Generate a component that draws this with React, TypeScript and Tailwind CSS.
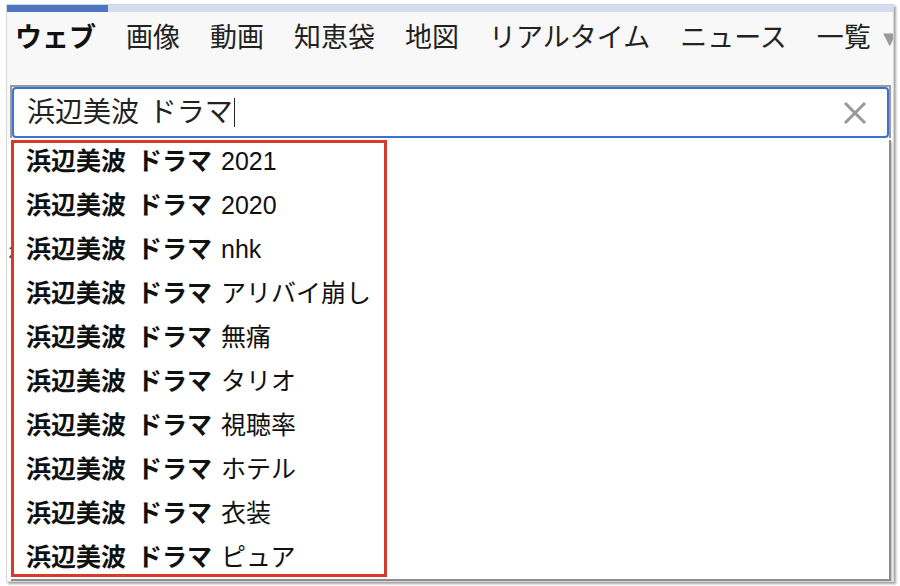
const tabs = ['ウェブ', '画像', '動画', '知恵袋', '地図', 'リアルタイム', 'ニュース', '一覧'];

const suggestions = ['2021', '2020', 'nhk', 'アリバイ崩し', '無痛', 'タリオ', '視聴率', 'ホテル', '衣装', 'ピュア'];

const font = { fontFamily: '"Liberation Sans", "Noto Sans CJK JP", sans-serif' };

export default function App() {
  return (
    <div className="w-[900px] h-[586px] bg-white overflow-hidden pt-[4px] pl-[6px]" style={font}>
      {/* Window frame */}
      <div className="relative w-[888px] h-[578px] border border-[#d6d6d6] bg-white shadow-[2px_2px_2px_rgba(0,0,0,0.35)] overflow-hidden">
        {/* Progress bar */}
        <div className="flex h-[7px]">
          <div className="w-[101px] bg-[#4d75c4]" />
          <div className="flex-1 bg-[#d3ddef]" />
        </div>

        {/* Tabs */}
        <div className="bg-[#f8f8f8]">
          <nav className="flex items-center gap-[30px] h-[52px] pl-[8px] text-[27px] text-[#222] whitespace-nowrap">
            {tabs.map((t, i) => (
              <span key={t} className={i === 0 ? 'font-bold text-[#111]' : ''}>
                {t}
              </span>
            ))}
            <span className="-ml-[22px] text-[22px] text-[#9a9a9a]">▼</span>
          </nav>

          {/* Search box */}
          <div className="pt-[21px] pl-[3px]">
            <div className="w-[881px] border-2 border-b-0 border-[#9b9b9b]">
              <div className="flex items-center h-[51px] border-2 border-[#3a73d5] rounded-[4px] bg-white pl-[13px] pr-[20px]">
                <span className="text-[28px] text-[#222] leading-none">
                  浜辺美波<span className="ml-[2px]"> </span>ドラマ
                </span>
                <span className="w-px h-[29px] bg-[#222] ml-[1px]" />
                <svg className="ml-auto" width="24" height="22" viewBox="0 0 24 22">
                  <path d="M2 1 L22 21 M22 1 L2 21" stroke="#9a9a9a" strokeWidth="3" fill="none" />
                </svg>
              </div>
            </div>
          </div>
        </div>

        {/* Page content under the dropdown */}
        <div className="pt-[100px] pl-[1px] text-[20px] text-[#333]">
          <span>ね</span>
        </div>

        {/* Suggestion dropdown */}
        <div className="absolute left-[4px] top-[135px] w-[880px] h-[441px] bg-white border-r-2 border-b-2 border-[#8d8d8d] shadow-[1px_2px_2px_rgba(0,0,0,0.3)]">
          <div className="w-[376px] h-[437px] border-[3px] border-[#d7392b] overflow-hidden">
            <ul className="-mt-[3px] pl-[12px]">
              {suggestions.map((s) => (
                <li key={s} className="flex items-center h-[44px] text-[25px] text-[#111] whitespace-nowrap">
                  <span className="font-bold">浜辺美波</span>
                  <span className="font-bold ml-[11px]">ドラマ</span>
                  <span className="ml-[9px]">{s}</span>
                </li>
              ))}
            </ul>
          </div>
        </div>
      </div>
    </div>
  );
}
